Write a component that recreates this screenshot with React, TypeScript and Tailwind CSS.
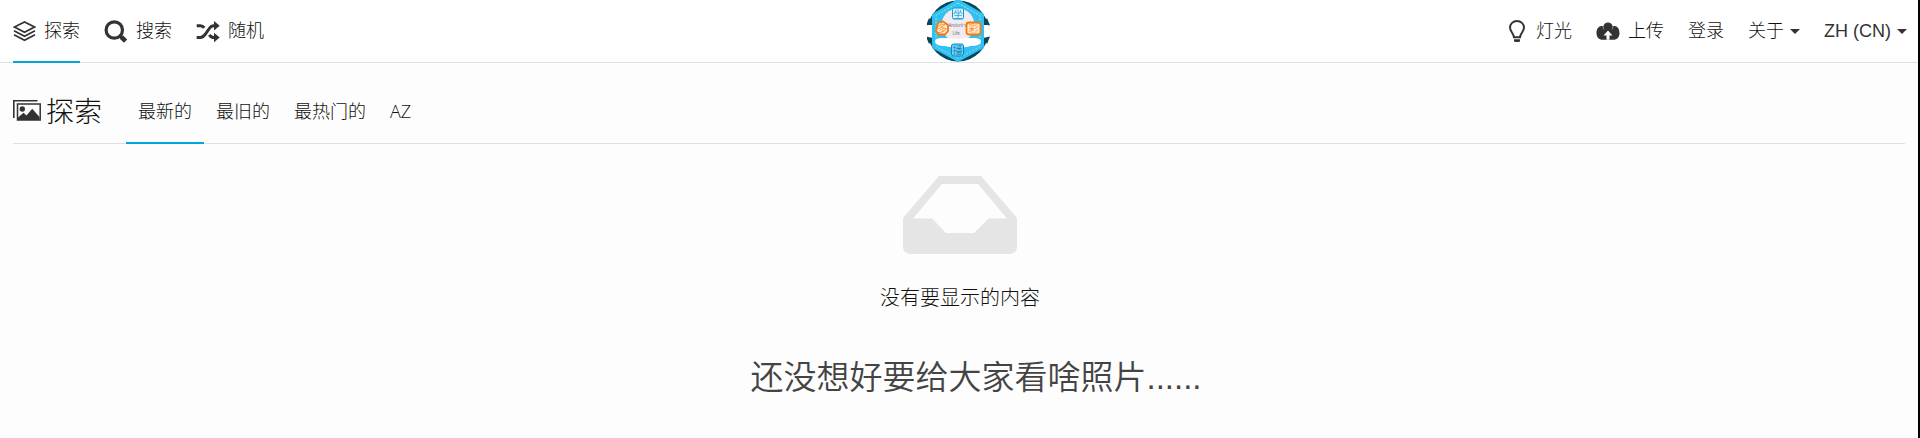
import React from "react";

const LayersIcon = () => (
  <svg className="h-6 w-[23px]" viewBox="0 0 23 24" fill="none" stroke="#333" strokeWidth="1.7" aria-hidden="true">
    <path d="M1.5 8 11.5 3 21.5 8 11.5 13.2Z" />
    <path d="M1 11.8 11.5 17.3 22 11.8M1 15.7 11.5 21.3 22 15.7" />
  </svg>
);

const SearchIcon = () => (
  <svg className="h-6 w-6" viewBox="0 0 24 24" fill="none" stroke="#333" aria-hidden="true">
    <circle cx="10.3" cy="11" r="8.2" strokeWidth="3.2" />
    <path d="m16 16.7 1.8 1.8" strokeWidth="3" />
    <path d="m17.3 18 4.3 4.1" strokeWidth="4.6" />
  </svg>
);

const ShuffleIcon = () => (
  <svg className="h-6 w-6" viewBox="0 0 24 24" fill="none" stroke="#333" strokeWidth="3" aria-hidden="true">
    <path d="M.7 18.5h3.6c2.3 0 3.4-1.2 4.8-3l4.2-6c1.4-2 2.4-2.8 4.5-2.8H19" />
    <path d="M.7 6.7h3.6c1.8 0 2.9.7 4 2.1M13.3 15.8c1.3 1.9 2.5 2.7 4.5 2.7H19" />
    <path d="m18 2 5.7 4.7L18 11.4ZM18 13.8l5.7 4.7-5.7 4.7Z" fill="#333" stroke="none" />
  </svg>
);

const BulbIcon = () => (
  <svg className="h-6 w-[18px]" viewBox="0 0 18 24" fill="none" stroke="#333" strokeWidth="2" aria-hidden="true">
    <path d="M6 18.2C5.6 14.2 2 12.5 2 8.6a7 6.7 0 0 1 14 0c0 3.9-3.6 5.6-4 9.6Z" />
    <path d="M6 20.3h6v1.200c0 1-.8 1.500-1.600 1.500H7.600C6.800 23 6 22.500 6 21.500Z" fill="#333" stroke="none" />
  </svg>
);

const CloudIcon = () => (
  <svg className="h-6 w-6" viewBox="0 0 24 24" aria-hidden="true">
    <path d="M5.800 20.700C2.600 20.700.5 17.900.5 14.100c0-3.900 1.700-6.700 4.600-7.100 1 0 1.500.1 2.200.5C7.800 5 9.700 3.500 12 3.500s4.200 1.500 4.700 4c.7-.4 1.200-.5 2.200-.5 2.900.4 4.600 3.200 4.600 7.100s-2.100 6.600-5.300 6.600Z" fill="#333" />
    <path d="M12 11.500 7.500 16.400h3v4.400h3v-4.400h3Z" fill="#fff" />
    <path d="M7.200 7.500c-.1 1.200.1 2 .6 2.900M16.800 7.500c.1 1.200-.1 2-.6 2.900" stroke="#aaa" strokeWidth=".8" fill="none" />
  </svg>
);

const ImagesIcon = () => (
  <svg className="h-6 w-7" viewBox="0 0 28 24" aria-hidden="true">
    <path d="M.8 19V1.800H24.500" fill="none" stroke="#333" strokeWidth="1.600" />
    <path d="M4.500 5h22.700v16H4.500Z" fill="none" stroke="#333" strokeWidth="1.500" />
    <circle cx="9.300" cy="10" r="2.700" fill="#333" />
    <path d="M5 21v-2.500l5.500-4.700 3 2.600 5.700-6.600L26.500 18v3Z" fill="#333" />
  </svg>
);

const InboxIcon = () => (
  <svg className="h-[78px] w-[114px]" viewBox="0 0 114 78" fill="#e5e5e5" fillRule="evenodd" aria-hidden="true">
    <path d="M36 0h42l36 42v29a7 7 0 0 1-7 7H7a7 7 0 0 1-7-7V42ZM39 8 10 42.500h19L43 57h28l14.500-14.500H104L75 8Z" />
  </svg>
);

const Caret = () => (
  <svg className="h-[5px] w-[10px]" viewBox="0 0 10 5" fill="#333" aria-hidden="true">
    <path d="M0 0h10L5 5Z" />
  </svg>
);

const Logo = () => (
  <svg
    className="h-[62px] w-16"
    viewBox="0 0 64 62"
    role="img"
    aria-label="站点标志"
    fontFamily="'Noto Sans CJK SC', sans-serif"
    fontSize="10"
    textAnchor="middle"
  >
    <circle cx="31" cy="31" r="30.500" fill="#07475c" />
    <path d="M-1 25h64v13H-1Z" fill="#fff" />
    <path d="M2 18-1 25.500 6 24ZM60 18l3 7.500-7-1.500ZM2 44l-3-7.500L6 38ZM60 44l3-7.500-7 1.500Z" fill="#07475c" />
    <path d="M31-1 57 14v34L31 62 5 48V14Z" fill="#2fc0f5" />
    <path d="M31 3 53 15.500v31L31 58.500 9 46.500v-31Z" fill="none" stroke="#a5dfc4" strokeWidth="1" strokeDasharray="2 1.500" />
    <circle cx="31" cy="25" r="16.500" fill="#f3eaef" />
    <path d="M8 41c1-4 9-3 13-3 6 1 13 1 19 0 5 0 13-1 14 3 0 4-5 5-10 5-8 2-18 2-26 0-5 0-10-1-10-5Z" fill="#fff" />
    <g fill="#123b47" fontSize="4.500">
      <text x="30.500" y="27">Anduril's</text>
      <text x="29" y="35">Life</text>
    </g>
    <rect x="25.500" y="8" width="11" height="11" rx="1.500" fill="#d5f4ff" stroke="#079bd5" strokeWidth="1" />
    <text x="31" y="17.500" fill="#0784bd">坐</text>
    <rect x="24.500" y="44" width="12" height="12" rx="2" fill="#6dd3fa" stroke="#0789c5" strokeWidth="1" />
    <text x="30.500" y="53.800" fill="#056ea3">播</text>
    <path d="m11 23 5-1.500 5 3.500v6l-3 3.500h-6L9 31Z" fill="#ffe7cb" stroke="#f47909" strokeWidth="1.800" />
    <text x="15.200" y="31.800" fill="#f47909">多</text>
    <rect x="39.500" y="22.500" width="14" height="12" rx="2.500" fill="#ffe7cb" stroke="#f47909" strokeWidth="1.800" />
    <text x="46.500" y="32.300" fill="#f47909">彩</text>
  </svg>
);

const NavLink = ({ icon, label, active }: { icon?: React.ReactNode; label: string; active?: boolean }) => (
  <a
    href="#"
    className={
      active
        ? "-mb-px flex items-center gap-2 border-b-2 border-[#00a7da]"
        : "-mb-px flex items-center gap-2 border-b-2 border-transparent"
    }
  >
    {icon}
    {label}
  </a>
);

const Tab = ({ label, active }: { label: string; active?: boolean }) => (
  <a
    href="#"
    className={
      active
        ? "-mb-px flex items-center border-b-2 border-[#00a7da] px-3"
        : "-mb-px flex items-center border-b-2 border-transparent px-3"
    }
  >
    {label}
  </a>
);

export default function App() {
  return (
    <div className="min-h-screen border-r-2 border-black bg-[#fdfdfd] font-['Liberation_Sans','Noto_Sans_CJK_SC',sans-serif] text-lg leading-6 font-light text-[#111]">
      <header className="grid grid-cols-[1fr_auto_1fr] border-b border-[#e1e1e1] bg-white">
        <nav className="flex gap-6 pl-[13px]">
          <NavLink icon={<LayersIcon />} label="探索" active />
          <NavLink icon={<SearchIcon />} label="搜索" />
          <NavLink icon={<ShuffleIcon />} label="随机" />
        </nav>
        <a href="#">
          <Logo />
        </a>
        <div className="flex items-center justify-end gap-6 pr-[11px]">
          <button type="button" className="flex items-center gap-2.5">
            <BulbIcon />
            灯光
          </button>
          <a href="#" className="flex items-center gap-2">
            <CloudIcon />
            上传
          </a>
          <a href="#">登录</a>
          <button type="button" className="flex items-center gap-1.5">
            关于
            <Caret />
          </button>
          <button type="button" className="flex items-center gap-1.5 text-[#333]">
            ZH (CN)
            <Caret />
          </button>
        </div>
      </header>
      <main>
        <div className="mx-[13px] mt-4 flex h-[65px] gap-6 border-b border-[#e1e1e1]">
          <h1 className="flex items-center gap-[5px] text-[28px] leading-8 font-light">
            <ImagesIcon />
            <span className="pt-1">探索</span>
          </h1>
          <nav className="flex font-['Open_Sans','Noto_Sans_CJK_SC',sans-serif]">
            <Tab label="最新的" active />
            <Tab label="最旧的" />
            <Tab label="最热门的" />
            <Tab label="AZ" />
          </nav>
        </div>
        <section className="flex flex-col items-center pt-8 pl-0.5">
          <InboxIcon />
          <p className="mt-7 text-xl leading-8">没有要显示的内容</p>
          <p className="mt-10 pl-8 text-[33px] leading-12 font-[350] text-[#444]">还没想好要给大家看啥照片......</p>
        </section>
      </main>
    </div>
  );
}
